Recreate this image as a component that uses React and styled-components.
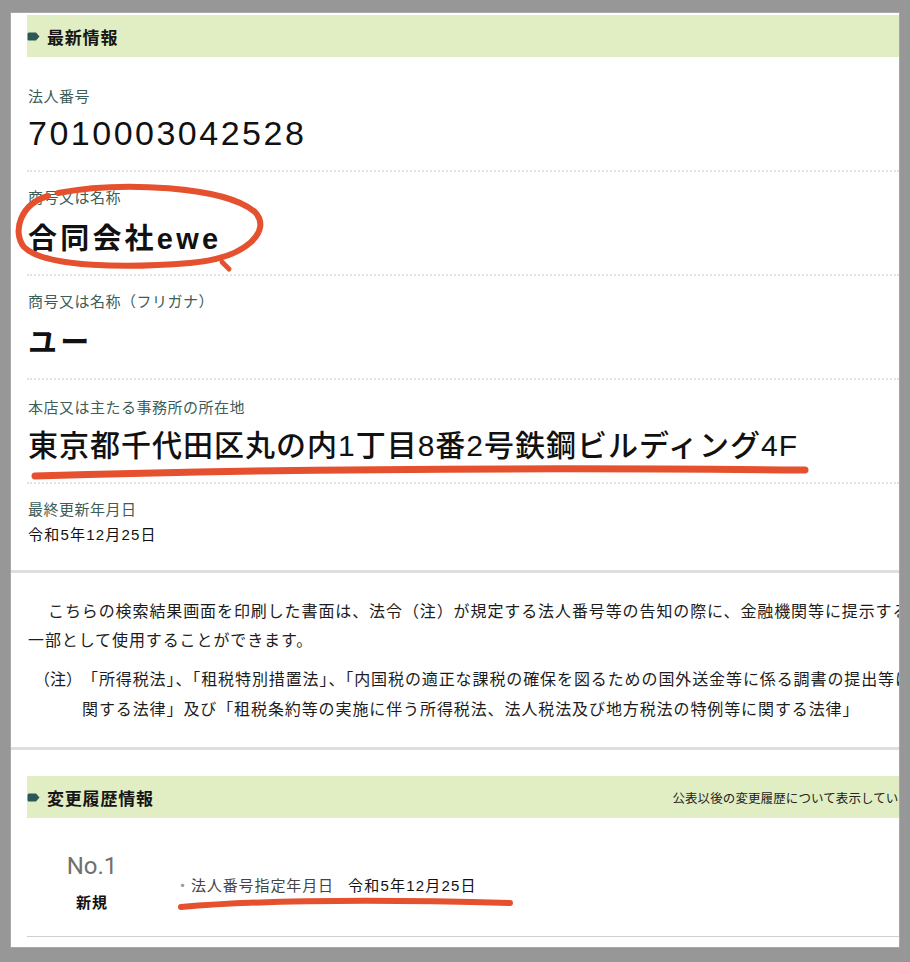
import React from 'react';
import styled, { createGlobalStyle } from 'styled-components';

const GlobalStyle = createGlobalStyle`
    html, body {
        margin: 0;
        padding: 0;
        background: #979797;
    }
    body {
        font-family: "Liberation Sans", "Noto Sans CJK JP", sans-serif;
        color: #111;
    }
`;

const Page = styled.div`
    position: relative;
    width: 910px;
    height: 962px;
    box-sizing: border-box;
    padding: 13px 11px 15px 11px;
    background: #979797;
`;

const Panel = styled.div`
    width: 888px;
    height: 934px;
    background: #fff;
    overflow: hidden;
    box-shadow: 0 0 0 1px #a8a8a8;
`;

const Indent = styled.div`
    padding-left: 16px;
`;

const SectionHeader = styled.div`
    display: flex;
    align-items: center;
    height: 42px;
    margin-top: ${p => p.$top || 0}px;
    background: #e1edc2;
    white-space: nowrap;
`;

const Marker = styled.svg`
    width: 13px;
    height: 9px;
    flex: none;
`;

const HeaderTitle = styled.h2`
    margin: 0 0 0 7px;
    font-size: 17px;
    font-weight: 700;
    letter-spacing: 0.8px;
    color: #161616;
`;

const HeaderNote = styled.span`
    margin-left: auto;
    margin-right: -36px;
    font-size: 12.5px;
    letter-spacing: 0.1px;
    color: #222;
`;

const Field = styled.div`
    padding: ${p => p.$top || 17}px 0 17px 1px;
    border-bottom: ${p => p.$last ? 'none' : '2px dotted #e2e2e2'};
    white-space: nowrap;
`;

const Label = styled.div`
    font-size: 15px;
    line-height: 18px;
    color: #3c5d59;
    letter-spacing: 0.5px;
`;

const valueStyles = {
    number: 'font-size: 34px; line-height: 40px; margin-top: 7px; letter-spacing: 2.5px; font-weight: 400;',
    name: 'font-size: 29px; line-height: 36px; margin-top: 14px; letter-spacing: 3.2px; font-weight: 700;',
    address: 'font-size: 30px; line-height: 38px; margin-top: 10px; letter-spacing: 1px; font-weight: 500;',
    small: 'font-size: 15px; line-height: 18px; margin-top: 7px; letter-spacing: 1.2px; font-weight: 400;',
};

const Value = styled.div`
    color: #111;
    ${p => valueStyles[p.$kind]}
`;

const Notice = styled.div`
    margin-top: 9px;
    border-top: 3px solid #dedede;
    border-bottom: 3px solid #dedede;
    padding: 24px 0 22px 17px;
    font-size: 16px;
    letter-spacing: 0.9px;
    color: #1c1c1c;
    white-space: nowrap;
`;

const Para = styled.p`
    margin: 0;
    line-height: 29px;
    text-indent: 20px;
`;

const NoteRow = styled.div`
    display: flex;
    margin-top: 10px;
    line-height: 30px;
`;

const NoteMark = styled.span`
    flex: none;
    width: 48px;
    padding-left: 6px;
    letter-spacing: 0;
`;

const HistoryRow = styled.div`
    display: flex;
    align-items: center;
    padding: 33px 0 23px 0;
    border-bottom: 1px solid #cfcfcf;
    white-space: nowrap;
`;

const NoCol = styled.div`
    width: 100px;
    margin-left: 15px;
    display: flex;
    flex-direction: column;
    align-items: center;
`;

const NoText = styled.div`
    font-family: Roboto, "Liberation Sans", sans-serif;
    font-size: 24px;
    line-height: 30px;
    color: #707070;
`;

const Kind = styled.div`
    margin-top: 12px;
    font-size: 15px;
    line-height: 20px;
    font-weight: 700;
    letter-spacing: 1px;
`;

const Item = styled.div`
    margin-left: 33px;
    margin-top: 4px;
    font-size: 15px;
    letter-spacing: 0.9px;
`;

const ItemLabel = styled.span`
    color: #444;
    &::before {
        content: '・';
        color: #999;
        margin-right: 0;
    }
`;

const ItemValue = styled.span`
    margin-left: 14px;
    letter-spacing: 1.2px;
    color: #111;
`;

const Annotations = styled.svg`
    position: absolute;
    top: 0;
    left: 0;
    pointer-events: none;
`;

const HeaderMarker = () => (
    <Marker viewBox="0 0 13 9">
        <path d="M2 0.5 H9 L12.5 4.5 L9 8.5 H2 A1.5 1.5 0 0 1 0.5 7 V2 A1.5 1.5 0 0 1 2 0.5 Z" fill="#2d5757" />
    </Marker>
);

const App = () => (
    <Page>
        <GlobalStyle />
        <Panel>
            <Indent>
                <SectionHeader $top={2}>
                    <HeaderMarker />
                    <HeaderTitle>最新情報</HeaderTitle>
                </SectionHeader>
                <Field $top={31}>
                    <Label>法人番号</Label>
                    <Value $kind="number">7010003042528</Value>
                </Field>
                <Field>
                    <Label>商号又は名称</Label>
                    <Value $kind="name">合同会社ewe</Value>
                </Field>
                <Field>
                    <Label>商号又は名称（フリガナ）</Label>
                    <Value $kind="name">ユー</Value>
                </Field>
                <Field $top={19}>
                    <Label>本店又は主たる事務所の所在地</Label>
                    <Value $kind="address">東京都千代田区丸の内1丁目8番2号鉄鋼ビルディング4F</Value>
                </Field>
                <Field $last>
                    <Label>最終更新年月日</Label>
                    <Value $kind="small">令和5年12月25日</Value>
                </Field>
            </Indent>

            <Notice>
                <Para>こちらの検索結果画面を印刷した書面は、法令（注）が規定する法人番号等の告知の際に、金融機関等に提示する書類の<br />一部として使用することができます。</Para>
                <NoteRow>
                    <NoteMark>（注）</NoteMark>
                    <span>「所得税法」、「租税特別措置法」、「内国税の適正な課税の確保を図るための国外送金等に係る調書の提出等に<br />関する法律」及び「租税条約等の実施に伴う所得税法、法人税法及び地方税法の特例等に関する法律」</span>
                </NoteRow>
            </Notice>

            <Indent>
                <SectionHeader $top={26}>
                    <HeaderMarker />
                    <HeaderTitle>変更履歴情報</HeaderTitle>
                    <HeaderNote>公表以後の変更履歴について表示しています。</HeaderNote>
                </SectionHeader>
                <HistoryRow>
                    <NoCol>
                        <NoText>No.1</NoText>
                        <Kind>新規</Kind>
                    </NoCol>
                    <Item>
                        <ItemLabel>法人番号指定年月日</ItemLabel>
                        <ItemValue>令和5年12月25日</ItemValue>
                    </Item>
                </HistoryRow>
            </Indent>
        </Panel>

        <Annotations width="910" height="962" viewBox="0 0 910 962">
            <g fill="none" stroke="#e5502e" strokeLinecap="round" strokeLinejoin="round">
                <path strokeWidth="6" d="M58 193 C120 181 225 186 255 212 C272 230 248 258 190 263 C130 268 45 268 24 247 C12 232 20 204 48 196" />
                <path strokeWidth="5" d="M222 262 L229 269" />
                <path strokeWidth="7" d="M35 476 Q360 466 805 470" />
                <path strokeWidth="6" d="M181 907 Q300 897 510 903" />
            </g>
        </Annotations>
    </Page>
);

export default App;
